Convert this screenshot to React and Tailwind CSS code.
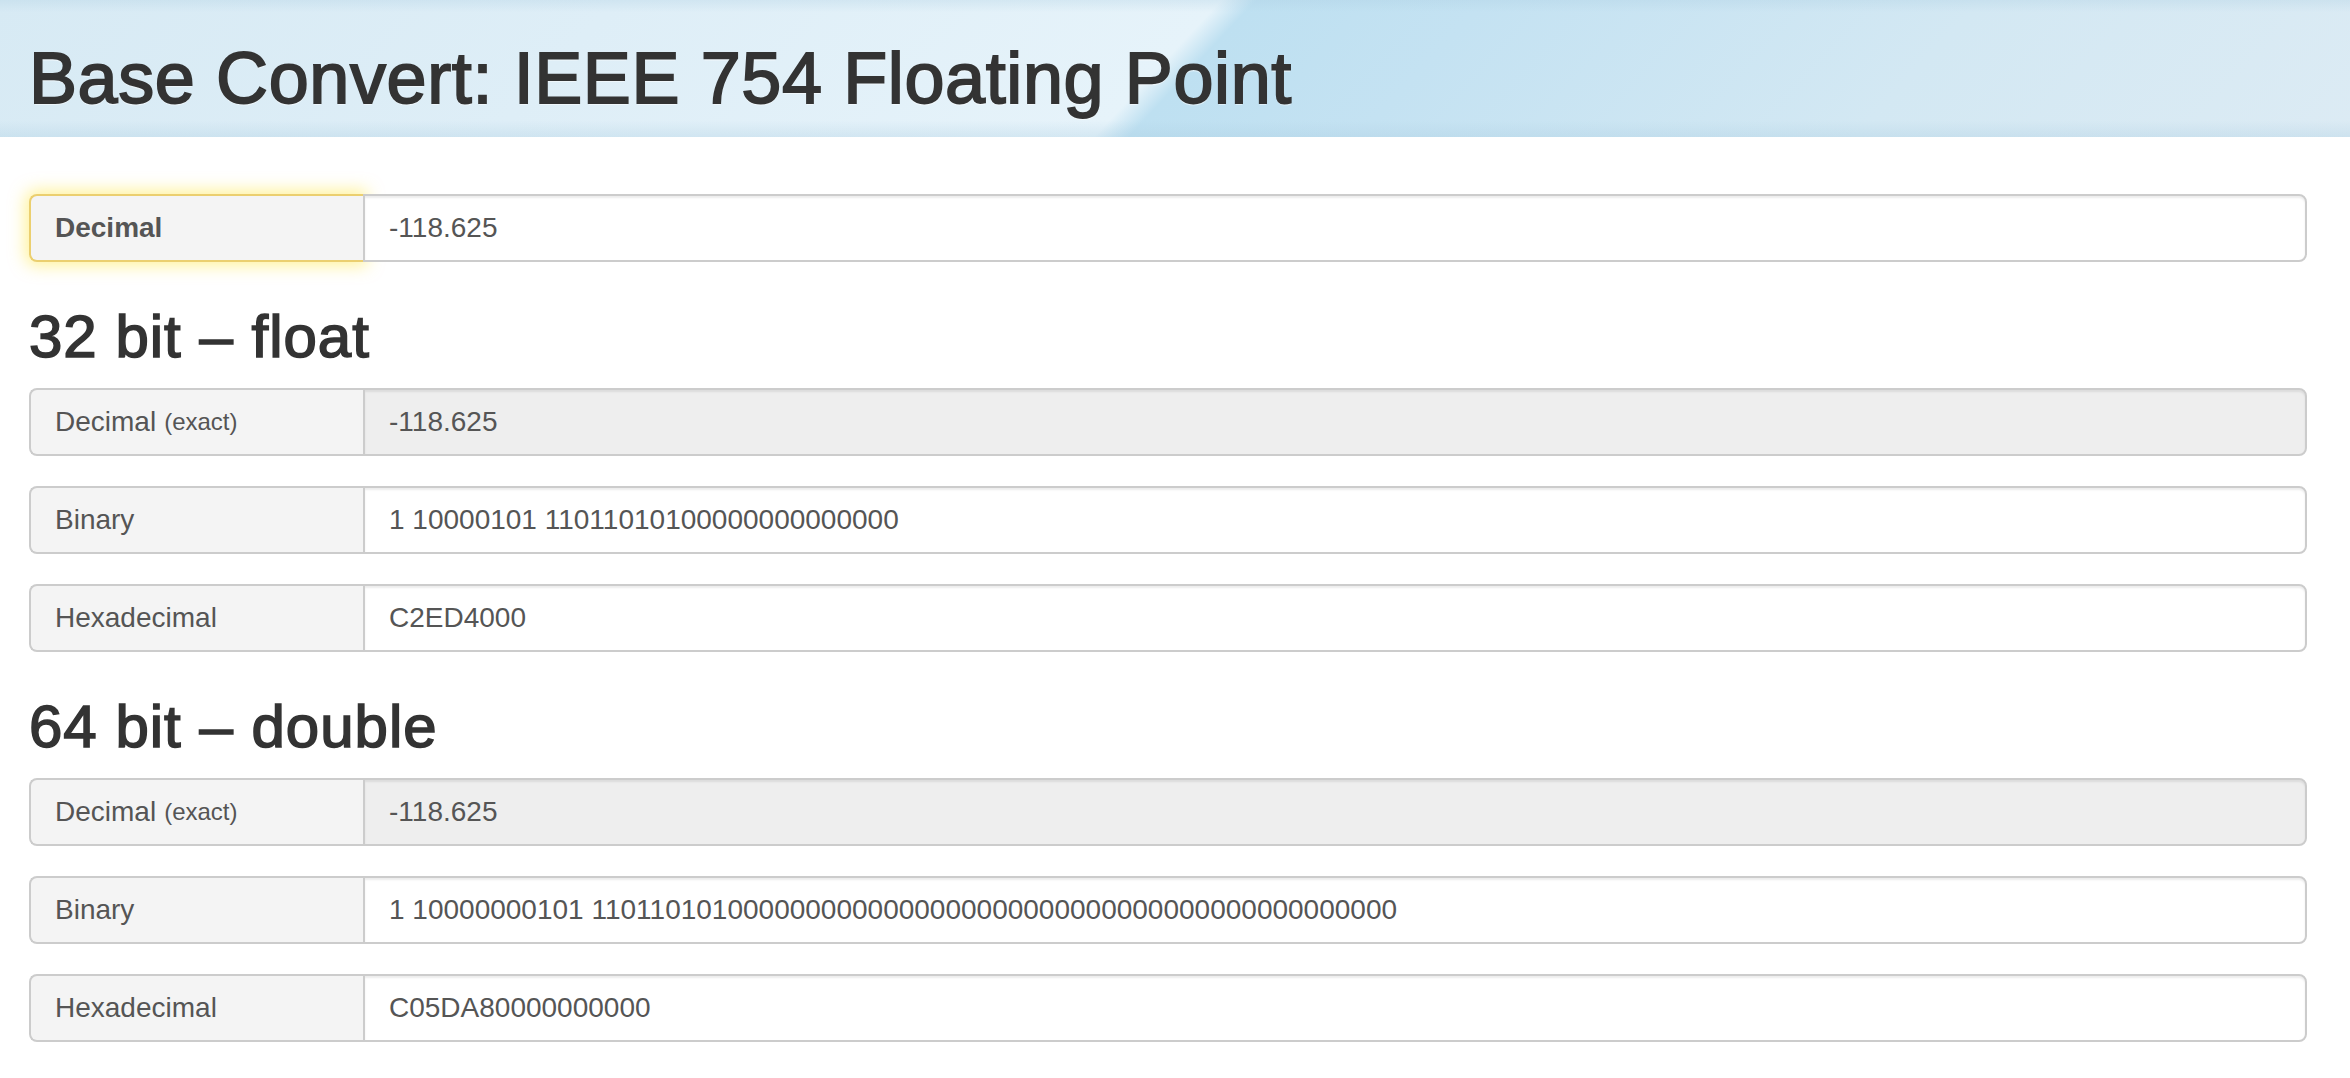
import React from "react";

function Row({ label, small, value, readOnly, highlight, bold }) {
  return (
    <div className="flex h-[68px] w-full">
      <div
        className={
          "flex w-[334px] shrink-0 items-center rounded-l-[8px] border-2 border-r-0 pl-[24px] text-[28px] text-[#555] bg-[#f4f4f4] " +
          (highlight
            ? "border-[#ebcf6f] shadow-[0_0_16px_4px_rgba(255,232,60,0.5)]"
            : "border-[#cccccc]")
        }
      >
        <span className={bold ? "font-bold" : ""}>{label}</span>
        {small ? <span className="ml-[8px] text-[24px]">{small}</span> : null}
      </div>
      <div
        className={
          "flex flex-1 items-center rounded-r-[8px] border-2 border-[#cccccc] pl-[24px] text-[28px] text-[#555] shadow-[inset_0_2px_2px_rgba(0,0,0,0.075)] " +
          (readOnly ? "bg-[#eeeeee]" : "bg-white")
        }
      >
        {value}
      </div>
    </div>
  );
}

function Heading({ children }) {
  return (
    <h2 className="mt-[42px] mb-[18px] text-[60px] leading-[66px] tracking-[1px] text-[#333] [-webkit-text-stroke-width:1.6px] [-webkit-text-stroke-color:#333]">
      {children}
    </h2>
  );
}

export default function App() {
  return (
    <div className="min-h-[1078px] w-full bg-white font-['Liberation_Sans',Arial,sans-serif]">
      <header className="h-[137px] w-full pl-[29px] pt-[39px] [background-image:linear-gradient(to_bottom,rgba(170,205,225,0.28)_0%,rgba(170,205,225,0)_9%,rgba(170,205,225,0)_88%,rgba(170,205,225,0.3)_100%),linear-gradient(133deg,#d7eaf4_0%,#deeef7_25%,#e6f3fa_49.3%,#bee0f1_50.7%,#c4e2f2_60%,#d3e8f3_80%,#dcebf4_100%)]">
        <h1 className="text-[72px] leading-[79px] tracking-[0.6px] text-[#333] [-webkit-text-stroke-width:1.8px] [-webkit-text-stroke-color:#333] [text-shadow:0_2px_0_rgba(255,255,255,0.5)]">
          Base Convert: IEEE 754 Floating Point
        </h1>
      </header>
      <main className="pl-[29px] pr-[43px] pt-[57px]">
        <Row label="Decimal" value="-118.625" highlight bold />
        <Heading>32 bit – float</Heading>
        <div className="flex flex-col gap-[30px]">
          <Row label="Decimal" small="(exact)" value="-118.625" readOnly />
          <Row label="Binary" value="1 10000101 11011010100000000000000" />
          <Row label="Hexadecimal" value="C2ED4000" />
        </div>
        <Heading>64 bit – double</Heading>
        <div className="flex flex-col gap-[30px]">
          <Row label="Decimal" small="(exact)" value="-118.625" readOnly />
          <Row
            label="Binary"
            value="1 10000000101 1101101010000000000000000000000000000000000000000000"
          />
          <Row label="Hexadecimal" value="C05DA80000000000" />
        </div>
      </main>
    </div>
  );
}
